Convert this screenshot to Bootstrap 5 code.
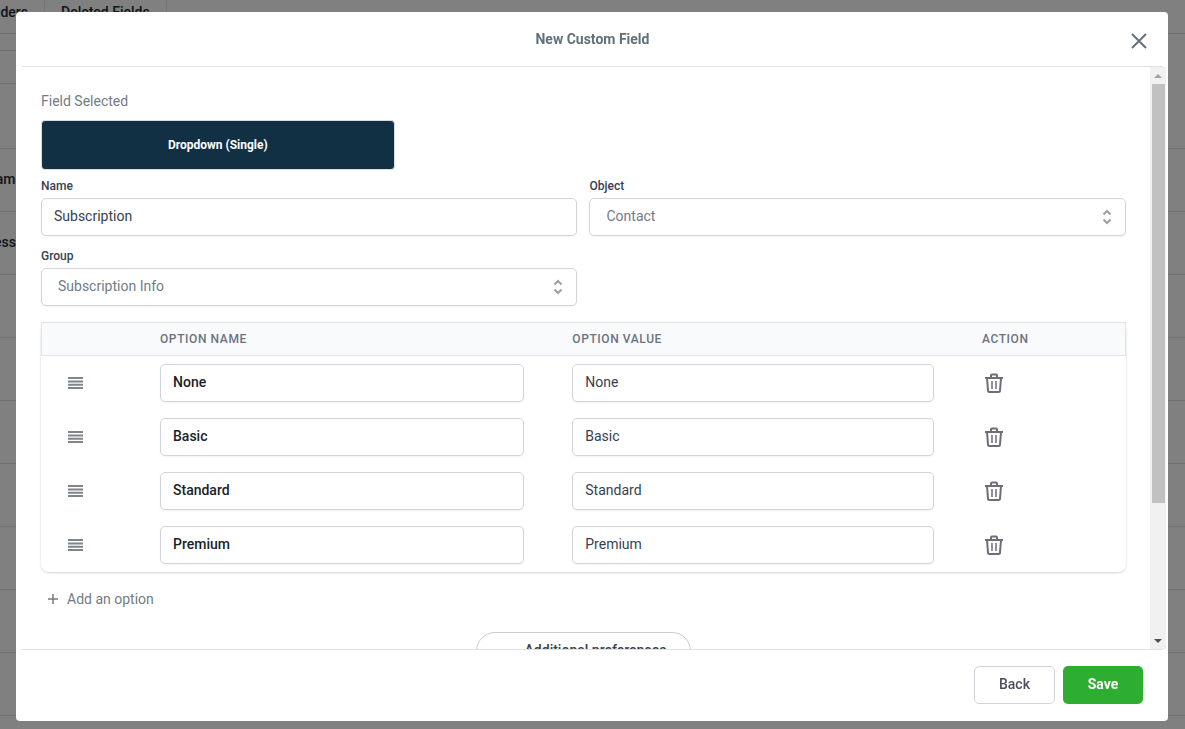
<!DOCTYPE html>
<html lang="en">
<head>
<meta charset="utf-8">
<meta name="viewport" content="width=device-width, initial-scale=1">
<title>New Custom Field</title>
<link href="https://cdn.jsdelivr.net/npm/bootstrap@5.3.0/dist/css/bootstrap.min.css" rel="stylesheet">
<style>
  body { font-family: Roboto, "Liberation Sans", sans-serif; font-size: 14px; line-height: 20px; color: #374151; background: #808080; }

  /* dimmed page behind the dialog */
  .backpage { height: 100vh; color: #111417; font-weight: 500; }
  .backpage .tabs-line { height: 34px; border-bottom: 1px solid #6d6d6d; }
  .backpage .tab-item { border-right: 1px solid #747474; height: 33px; padding: 2px 16px 0; }
  .backpage .tab-first { width: 45px; }
  .backpage .tab-item, .backpage .cell { display: flex; justify-content: flex-end; white-space: nowrap; overflow: hidden; }
  .backpage .tool-box { width: 50%; height: 34px; margin-top: 16px; border: 1px solid #6d6d6d; border-width: 1px 0; }
  .backpage .line-row { height: 63px; padding-bottom: 2px; border-bottom: 1px solid #717171; display: flex; align-items: center; }
  .backpage .line-head { height: 65px; }
  .backpage .cell { width: 23px; }
  .backpage .cell-short { width: 16px; }

  .overlay { padding: 12px 17px 8px 16px; }
  .dialog { background: #fff; border-radius: 4px; overflow: hidden; }
  .dialog-head { height: 55px; margin: 0 5px 0 6px; border-bottom: 1px solid #dfe1e3; }
  .dialog-head h1 { font-size: 14px; line-height: 20px; font-weight: 700; color: #607179; }
  .icon-btn { border: 0; background: none; padding: 0; color: #737b85; }
  .close-btn { right: 13px; top: 18px; line-height: 0; color: #66707a; }
  .dialog-foot { margin: 0 5px 0 6px; padding: 16px 20px 17px; border-top: 1px solid #dfe1e3; }

  .scroller { overflow-y: auto; scrollbar-width: none; padding: 24px 24px 24px 25px; }
  .scroller::-webkit-scrollbar { display: none; }
  .bar { width: 16px; margin-right: 2px; background: #f1f1f1; }
  .bar-arrow { height: 17px; display: flex; align-items: center; justify-content: center; }
  .bar-thumb { flex: 419; margin: 0 1px 0 2px; background: #c1c1c1; }
  .bar-rest { flex: 129; }

  .gray { color: #737b85; }
  .picked { margin-bottom: 9px; }
  .row-12 { --bs-gutter-x: 12px; }
  .type-tile { height: 50px; padding-bottom: 1px; background: #123043; color: #fff; font-size: 12px; font-weight: 700; border: 1px solid #d9dee2; border-radius: 4px; }
  .field-label { display: block; font-size: 12px; line-height: 16px; font-weight: 500; margin-bottom: 4px; }
  .box { height: 38px; padding: 7px 12px 9px; font-size: 14px; line-height: 20px; border: 1px solid #d1d5db; border-radius: 5px; color: #374151; box-shadow: 0 1px 2px rgba(0,0,0,.05); }
  .box-select { padding-left: 16px; color: #737b85; background: #fff url("data:image/svg+xml,%3Csvg xmlns='http://www.w3.org/2000/svg' viewBox='0 0 20 20' fill='none' stroke='%239c9fa4' stroke-width='2'%3E%3Cpath d='M6.500 7.500l3.500-3.500 3.500 3.500M6.500 12.500l3.500 3.500 3.500-3.500'/%3E%3C/svg%3E") no-repeat right 8px center / 20px 20px; }
  .box-name { font-weight: 500; color: #1a1f28; }

  .opt-wrap { margin-top: 16px; border-radius: 8px; box-shadow: 0 1px 3px rgba(0,0,0,.1), 0 1px 2px rgba(0,0,0,.08); }
  .opt-table { width: 100%; table-layout: fixed; border-collapse: separate; border-spacing: 0; }
  .opt-table th { height: 34px; padding: 0 24px; background: #f9fafb; border: 1px solid #e1e5e9; border-width: 1px 0; font-size: 12px; line-height: 16px; font-weight: 500; letter-spacing: .6px; color: #6b7280; }
  .opt-table th:first-child { border-left-width: 1px; width: 95px; }
  .opt-table th:last-child { border-right-width: 1px; width: 168px; }
  .opt-table th.w-name { width: 38%; }
  .opt-table td { height: 54px; padding: 8px 24px; line-height: 0; }
  .grip { margin-left: 3px; color: #7c868b; }
  .bin { margin-left: 3px; color: #6d6e78; }
  .add-btn { margin-top: 17px; margin-left: 7px; gap: 9px; }
  .more-btn { margin-top: 23px; height: 38px; padding: 7px 24px 9px 48px; border: 1px solid #c9cbce; border-radius: 19px; background: #fff; font-weight: 500; color: #374151; }
  .act { min-width: 80px; height: 38px; padding: 0 24px 2px; font-size: 14px; border-radius: 5px; }
  .act-back { border: 1px solid #d1d5db; background: #fff; color: #4b5060; font-weight: 500; }
  .act-save { background: #2eae30; border: 0; color: #fff; font-weight: 700; }
</style>
</head>
<body class="overflow-hidden">
<svg class="d-none">
  <symbol id="trash" viewBox="0 0 18 20"><g fill="none" stroke="currentColor" stroke-width="2"><path d="M0 5h18M6 5V2.500a1 1 0 0 1 1-1h4a1 1 0 0 1 1 1V5M2 5l1 12.500a1.500 1.500 0 0 0 1.500 1.500h9a1.500 1.500 0 0 0 1.500-1.500L16 5"/><path stroke-width="1.500" d="M7 8v8M11 8v8"/></g></symbol>
  <symbol id="grip" viewBox="0 0 16 12"><path fill="currentColor" d="M0 0h15v2H0zM0 3.500h15v2H0zM0 6.800h15v2H0zM0 10h15v2H0z"/></symbol>
</svg>

<div class="backpage overflow-hidden" aria-hidden="true">
  <div class="tabs-line d-flex">
    <div class="tab-item tab-first">Folders</div>
    <div class="tab-item">Deleted Fields</div>
  </div>
  <div class="tool-box"></div>
  <div class="line-row line-head"></div>
  <div class="line-row"><span class="cell">Name</span></div>
  <div class="line-row"><span class="cell cell-short">Address</span></div>
  <div class="line-row"></div><div class="line-row"></div><div class="line-row"></div>
  <div class="line-row"></div><div class="line-row"></div><div class="line-row"></div>
  <div class="line-row"></div>
</div>

<div class="overlay position-fixed top-0 start-0 w-100 h-100 d-flex">
  <div class="dialog d-flex flex-column flex-fill" role="dialog" aria-labelledby="dlg-title">
    <header class="dialog-head flex-shrink-0 d-flex align-items-center justify-content-center position-relative">
      <h1 class="m-0" id="dlg-title">New Custom Field</h1>
      <button type="button" class="icon-btn close-btn position-absolute" aria-label="Close">
        <svg width="22" height="22" viewBox="0 0 22 22" fill="none" stroke="currentColor" stroke-width="2"><path d="M4 4l14 14M18 4L4 18"/></svg>
      </button>
    </header>

    <div class="d-flex flex-fill overflow-hidden">
      <main class="scroller flex-fill">
        <div class="gray picked">Field Selected</div>
        <div class="row row-12">
          <div class="col-4"><div class="type-tile d-flex align-items-center justify-content-center">Dropdown (Single)</div></div>
        </div>
        <div class="row row-12 pt-2">
          <div class="col-6">
            <label class="field-label" for="f-name">Name</label>
            <input class="form-control box" id="f-name" type="text" value="Subscription">
          </div>
          <div class="col-6">
            <label class="field-label" for="f-object">Object</label>
            <select class="form-select box box-select" id="f-object"><option>Contact</option></select>
          </div>
          <div class="col-6 mt-2 pt-1">
            <label class="field-label" for="f-group">Group</label>
            <select class="form-select box box-select" id="f-group"><option>Subscription Info</option></select>
          </div>
        </div>

        <div class="opt-wrap">
          <table class="opt-table">
            <thead><tr><th></th><th class="w-name">OPTION NAME</th><th>OPTION VALUE</th><th>ACTION</th></tr></thead>
            <tbody>
              <tr>
                <td><svg class="grip" width="16" height="12"><use href="#grip"/></svg></td>
                <td><input class="form-control box box-name" type="text" aria-label="Option name 1" value="None"></td>
                <td><input class="form-control box" type="text" aria-label="Option value 1" value="None"></td>
                <td><button type="button" class="icon-btn bin" aria-label="Delete None"><svg width="18" height="20"><use href="#trash"/></svg></button></td>
              </tr>
              <tr>
                <td><svg class="grip" width="16" height="12"><use href="#grip"/></svg></td>
                <td><input class="form-control box box-name" type="text" aria-label="Option name 2" value="Basic"></td>
                <td><input class="form-control box" type="text" aria-label="Option value 2" value="Basic"></td>
                <td><button type="button" class="icon-btn bin" aria-label="Delete Basic"><svg width="18" height="20"><use href="#trash"/></svg></button></td>
              </tr>
              <tr>
                <td><svg class="grip" width="16" height="12"><use href="#grip"/></svg></td>
                <td><input class="form-control box box-name" type="text" aria-label="Option name 3" value="Standard"></td>
                <td><input class="form-control box" type="text" aria-label="Option value 3" value="Standard"></td>
                <td><button type="button" class="icon-btn bin" aria-label="Delete Standard"><svg width="18" height="20"><use href="#trash"/></svg></button></td>
              </tr>
              <tr>
                <td><svg class="grip" width="16" height="12"><use href="#grip"/></svg></td>
                <td><input class="form-control box box-name" type="text" aria-label="Option name 4" value="Premium"></td>
                <td><input class="form-control box" type="text" aria-label="Option value 4" value="Premium"></td>
                <td><button type="button" class="icon-btn bin" aria-label="Delete Premium"><svg width="18" height="20"><use href="#trash"/></svg></button></td>
              </tr>
            </tbody>
          </table>
        </div>

        <button type="button" class="icon-btn add-btn d-flex align-items-center">
          <svg width="10" height="10" viewBox="0 0 10 10" fill="none" stroke="currentColor" stroke-width="1.500"><path d="M5 0v10M0 5h10"/></svg>
          Add an option
        </button>
        <div class="d-flex justify-content-center">
          <button type="button" class="more-btn">Additional preferences</button>
        </div>
      </main>
      <div class="bar flex-shrink-0 d-flex flex-column" aria-hidden="true">
        <div class="bar-arrow"><svg width="8" height="4"><path d="M0 4l4-4 4 4z" fill="#a3a3a3"/></svg></div>
        <div class="bar-thumb"></div>
        <div class="bar-rest"></div>
        <div class="bar-arrow"><svg width="8" height="4"><path d="M0 0l4 4 4-4z" fill="#505050"/></svg></div>
      </div>
    </div>

    <footer class="dialog-foot flex-shrink-0 d-flex justify-content-end gap-2">
      <button type="button" class="act act-back">Back</button>
      <button type="button" class="act act-save">Save</button>
    </footer>
  </div>
</div>
<script src="https://cdn.jsdelivr.net/npm/bootstrap@5.3.0/dist/js/bootstrap.bundle.min.js"></script>
</body>
</html>
